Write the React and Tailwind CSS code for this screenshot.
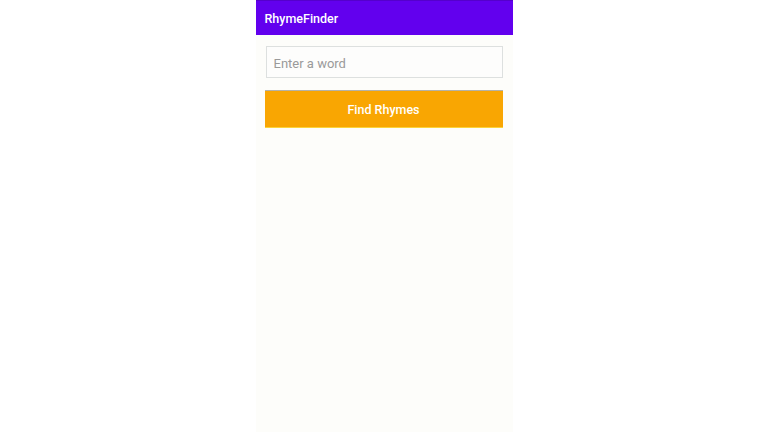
import { useState } from 'react';

export default function App() {
  const [word, setWord] = useState('');

  return (
    <div className="flex h-[432px] w-full justify-center bg-white font-['Roboto',sans-serif]">
      <div className="flex w-[257px] flex-col bg-[#fdfdfa]">
        {/* App bar */}
        <div className="flex h-[35px] items-center border-t border-[#5500cc] bg-[#6200ee] px-[9px] pt-[2px]">
          <span className="text-[12.5px] font-medium text-white">RhymeFinder</span>
        </div>

        {/* Content */}
        <div className="flex flex-col px-[9px] pt-[11px]">
          <input
            value={word}
            onChange={(event) => setWord(event.target.value)}
            placeholder="Enter a word"
            className="mx-[1px] h-[32px] border border-[#dde0df] bg-[#fdfdfc] px-[7px] pt-[3px] text-[13px] text-gray-800 outline-none placeholder:text-[#9a9a9a]"
          />
          <button
            type="button"
            className="mt-[12px] h-[38px] w-[238px] border-t border-b border-t-[#b5b2a8] border-b-[#fbd33a] bg-[#f9a602] pt-[2px] text-[12.5px] font-medium text-white"
          >
            Find Rhymes
          </button>
        </div>
      </div>
    </div>
  );
}
